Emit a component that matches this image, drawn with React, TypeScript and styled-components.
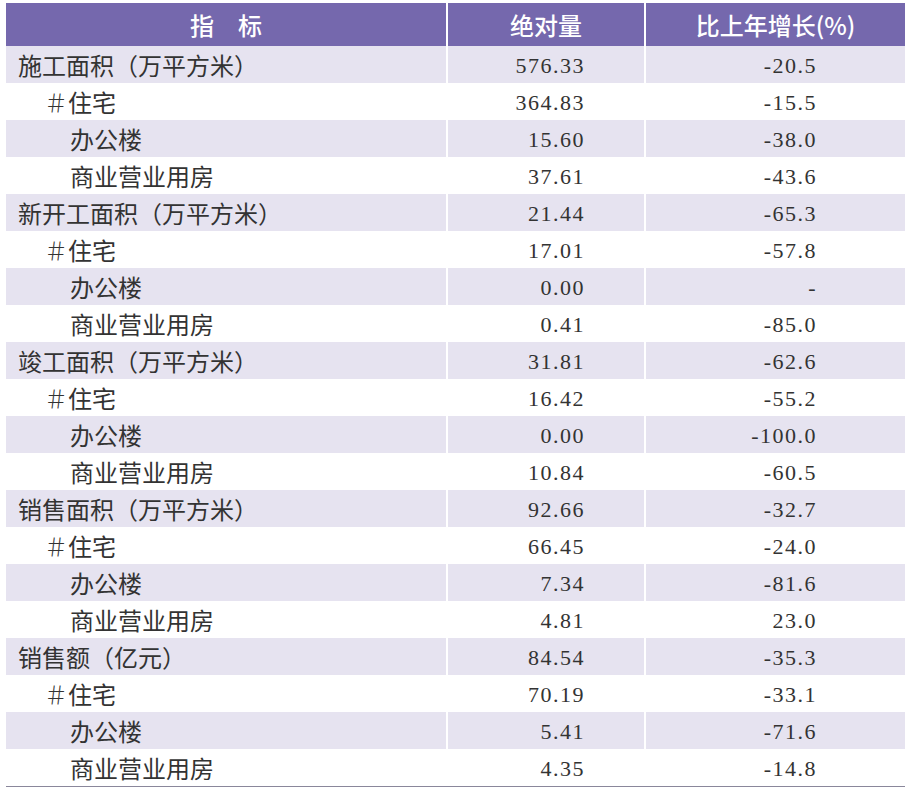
import React from "react";
import styled, { createGlobalStyle } from "styled-components";

const GlobalStyle = createGlobalStyle`
  html, body { margin: 0; padding: 0; background: #ffffff; }
  body { font-family: "Noto Sans CJK SC", "Noto Sans", sans-serif; }
`;

const Page = styled.div`
  padding: 3px 3px 0 6px;
  width: 908px;
  box-sizing: border-box;
`;

const Table = styled.div`
  display: flex;
  flex-direction: column;
  width: 899px;
  border-bottom: 1px solid #8a879b;
`;

const Row = styled.div<{ $header?: boolean }>`
  display: grid;
  grid-template-columns: 440px 196px 259px;
  column-gap: 2px;
  height: ${(p) => (p.$header ? "43px" : "37px")};
`;

const HeadCell = styled.div`
  background: #7568ad;
  color: #ffffff;
  font-family: "Noto Sans CJK SC", "Noto Sans", sans-serif;
  font-size: 24px;
  font-weight: 500;
  display: flex;
  align-items: center;
  justify-content: center;
  white-space: pre;
`;

const Cell = styled.div<{ $shaded?: boolean }>`
  background: ${(p) => (p.$shaded ? "#e6e3f0" : "#ffffff")};
  color: #333333;
  display: flex;
  align-items: center;
  white-space: pre;
`;

const LabelCell = styled(Cell)<{ $indent: number }>`
  font-family: "Noto Sans CJK SC", sans-serif;
  font-size: 24px;
  padding-left: ${(p) => (p.$indent ? 64 : 12)}px;
`;

const Hash = styled.span`
  display: inline-block;
  width: 24px;
  margin-left: -26px;
  text-align: center;
  font-family: "Noto Sans CJK SC", sans-serif;
  font-size: 24px;
  font-weight: 300;
`;

const NumCell = styled(Cell)<{ $pad: number }>`
  justify-content: flex-end;
  padding-right: ${(p) => p.$pad}px;
  padding-top: 3px;
  box-sizing: border-box;
  font-family: "Liberation Serif", serif;
  font-size: 22px;
  letter-spacing: 1.5px;
`;

type Item = { label: string; indent: number; hash?: boolean; value: string; growth: string };

const groups: [string, string, string, string[][]][] = [
  ["施工面积（万平方米）", "576.33", "-20.5", [["364.83", "-15.5"], ["15.60", "-38.0"], ["37.61", "-43.6"]]],
  ["新开工面积（万平方米）", "21.44", "-65.3", [["17.01", "-57.8"], ["0.00", "-"], ["0.41", "-85.0"]]],
  ["竣工面积（万平方米）", "31.81", "-62.6", [["16.42", "-55.2"], ["0.00", "-100.0"], ["10.84", "-60.5"]]],
  ["销售面积（万平方米）", "92.66", "-32.7", [["66.45", "-24.0"], ["7.34", "-81.6"], ["4.81", "23.0"]]],
  ["销售额（亿元）", "84.54", "-35.3", [["70.19", "-33.1"], ["5.41", "-71.6"], ["4.35", "-14.8"]]],
];

const subLabels = ["住宅", "办公楼", "商业营业用房"];

const rows: Item[] = groups.flatMap(([label, value, growth, subs]) => [
  { label, indent: 0, value, growth },
  ...subs.map((s, i) => ({ label: subLabels[i], indent: 1, hash: i === 0, value: s[0], growth: s[1] })),
]);

export default function App() {
  return (
    <>
      <GlobalStyle />
      <Page>
        <Table>
          <Row $header>
            <HeadCell>指　标</HeadCell>
            <HeadCell>绝对量</HeadCell>
            <HeadCell>比上年增长(%)</HeadCell>
          </Row>
          {rows.map((r, i) => {
            const shaded = i % 2 === 0;
            return (
              <Row key={i}>
                <LabelCell $shaded={shaded} $indent={r.indent}>
                  {r.hash && <Hash>＃</Hash>}
                  {r.label}
                </LabelCell>
                <NumCell $shaded={shaded} $pad={59}>{r.value}</NumCell>
                <NumCell $shaded={shaded} $pad={88}>{r.growth}</NumCell>
              </Row>
            );
          })}
        </Table>
      </Page>
    </>
  );
}
